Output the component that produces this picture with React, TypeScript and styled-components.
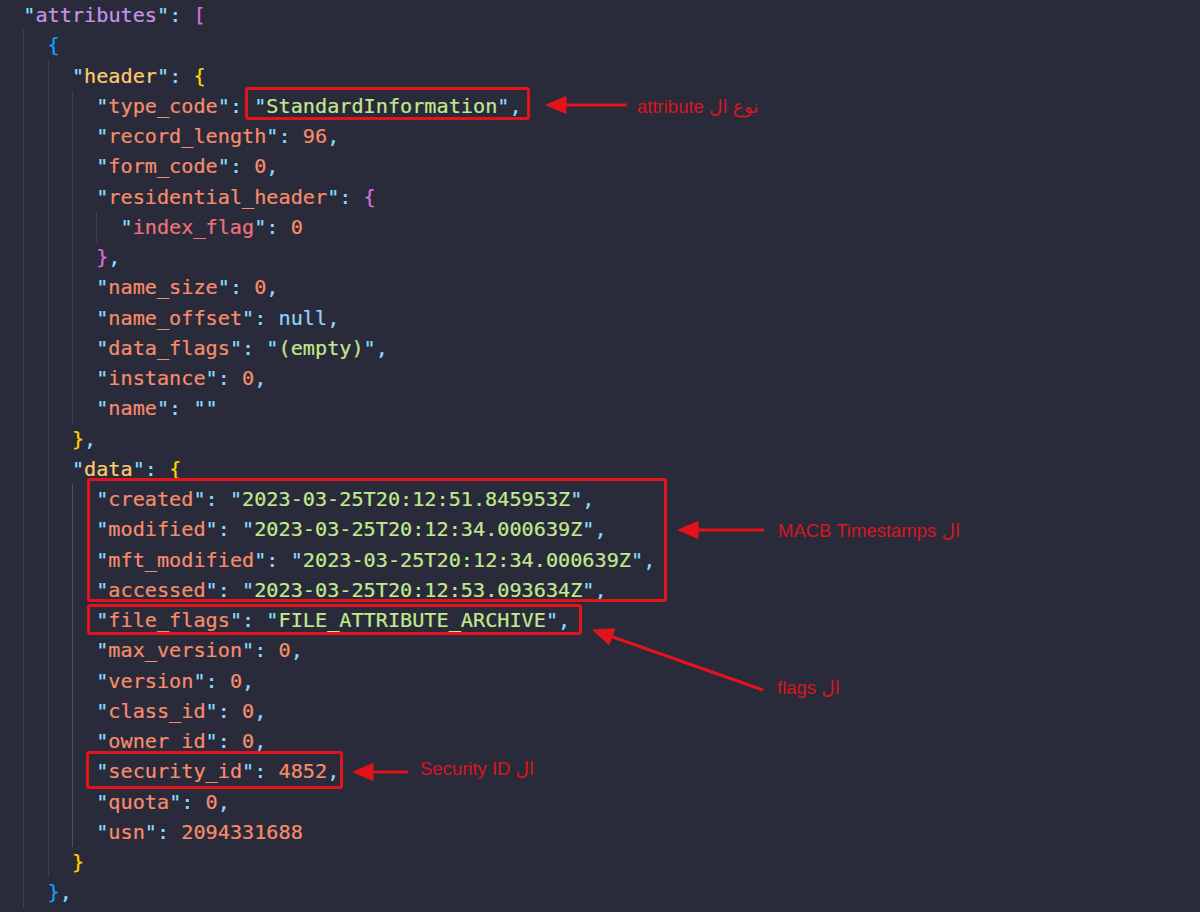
import React from "react";
import styled, { createGlobalStyle } from "styled-components";

const GlobalStyle = createGlobalStyle`
  html, body { margin: 0; padding: 0; background: #292b3b; }
  body { width: 1200px; height: 912px; overflow: hidden; }
`;

const COLORS = {
  p: "#89ddff",
  k1: "#c792ea",
  k2: "#ffcb6b",
  k3: "#f78c6c",
  k4: "#f07178",
  s: "#c3e88d",
  n: "#f78c6c",
  nl: "#8fd3ff",
  gold: "#ffd700",
  orchid: "#da70d6",
  blue: "#179fff",
};
type Kind = keyof typeof COLORS;

const RED = "#e3121b";

const Editor = styled.main`
  position: relative;
  width: 1200px;
  height: 912px;
  background: #292b3b;
  overflow: hidden;
  font-family: "DejaVu Sans Mono", "Liberation Mono", monospace;
  font-size: 20.2px;
`;

const Code = styled.div`
  margin-left: -1px;
  padding-left: 2ch;
  -webkit-text-stroke: 0.2px currentColor;
`;

const Line = styled.div`
  height: 30.25px;
  line-height: 30.25px;
  white-space: pre;
`;

const Block = styled.div<{ $active?: boolean }>`
  border-left: 1px solid ${(p) => (p.$active ? "#4d5063" : "#3e4154")};
  padding-left: calc(2ch - 1px);
`;

const Tok = styled.span<{ $k: Kind }>`
  color: ${(p) => COLORS[p.$k]};
`;

const Mark = styled.span<{ $inset: string }>`
  position: relative;
  display: inline-block;
  vertical-align: top;
  &::after {
    content: "";
    position: absolute;
    inset: ${(p) => p.$inset};
    border: 3px solid ${RED};
    border-radius: 3px;
    pointer-events: none;
  }
`;

const MarkGroup = styled.div<{ $inset: string }>`
  position: relative;
  width: fit-content;
  &::after {
    content: "";
    position: absolute;
    inset: ${(p) => p.$inset};
    border: 3px solid ${RED};
    border-radius: 3px;
    pointer-events: none;
  }
`;

const Overlay = styled.svg`
  position: absolute;
  left: 0;
  top: 0;
  pointer-events: none;
`;

const Label = styled.span<{ $x: number; $y: number }>`
  position: absolute;
  left: ${(p) => p.$x}px;
  top: ${(p) => p.$y}px;
  font-family: "Liberation Sans", "DejaVu Sans", sans-serif;
  font-size: 18.5px;
  line-height: 20px;
  color: #d8161f;
  white-space: nowrap;
`;

const Key = ({ name, level = "k3" }: { name: string; level?: Kind }) => (
  <>
    <Tok $k="p">"</Tok>
    <Tok $k={level}>{name}</Tok>
    <Tok $k="p">": </Tok>
  </>
);

const Str = ({ v }: { v: string }) => (
  <>
    <Tok $k="p">"</Tok>
    <Tok $k="s">{v}</Tok>
    <Tok $k="p">"</Tok>
  </>
);

const Comma = () => <Tok $k="p">,</Tok>;

type FieldProps = {
  name: string;
  value: string;
  kind: "s" | "n" | "nl";
  comma?: boolean;
  level?: Kind;
};

const Value = ({ value, kind }: { value: string; kind: "s" | "n" | "nl" }) =>
  kind === "s" ? <Str v={value} /> : <Tok $k={kind}>{value}</Tok>;

const Field = ({ name, value, kind, comma, level }: FieldProps) => (
  <Line>
    <Key name={name} level={level} />
    <Value value={value} kind={kind} />
    {comma && <Comma />}
  </Line>
);

const Arrow = ({ x1, y1, x2, y2 }: { x1: number; y1: number; x2: number; y2: number }) => {
  // (x1,y1) tail, (x2,y2) tip
  const dx = x2 - x1;
  const dy = y2 - y1;
  const len = Math.hypot(dx, dy);
  const ux = dx / len;
  const uy = dy / len;
  const hl = 20;
  const hw = 8.5;
  const bx = x2 - ux * hl;
  const by = y2 - uy * hl;
  const px = -uy * hw;
  const py = ux * hw;
  return (
    <g fill={RED} stroke={RED}>
      <line x1={x1} y1={y1} x2={bx + ux * 2} y2={by + uy * 2} strokeWidth={3.2} />
      <polygon
        points={`${x2},${y2} ${bx + px},${by + py} ${bx - px},${by - py}`}
        strokeWidth={1}
        strokeLinejoin="round"
      />
    </g>
  );
};

export default function App() {
  return (
    <>
      <GlobalStyle />
      <Editor>
        <Code>
          <Line>
            <Key name="attributes" level="k1" />
            <Tok $k="orchid">[</Tok>
          </Line>
          <Block>
            <Line>
              <Tok $k="blue">{"{"}</Tok>
            </Line>
            <Block>
              <Line>
                <Key name="header" level="k2" />
                <Tok $k="gold">{"{"}</Tok>
              </Line>
              <Block>
                <Line>
                  <Key name="type_code" />
                  <Mark $inset="-4px -8px 1px -9px">
                    <Str v="StandardInformation" />
                    <Comma />
                  </Mark>
                </Line>
                <Field name="record_length" value="96" kind="n" comma />
                <Field name="form_code" value="0" kind="n" comma />
                <Line>
                  <Key name="residential_header" />
                  <Tok $k="orchid">{"{"}</Tok>
                </Line>
                <Block>
                  <Field name="index_flag" value="0" kind="n" level="k4" />
                </Block>
                <Line>
                  <Tok $k="orchid">{"}"}</Tok>
                  <Comma />
                </Line>
                <Field name="name_size" value="0" kind="n" comma />
                <Field name="name_offset" value="null" kind="nl" comma />
                <Field name="data_flags" value="(empty)" kind="s" comma />
                <Field name="instance" value="0" kind="n" comma />
                <Field name="name" value="" kind="s" />
              </Block>
              <Line>
                <Tok $k="gold">{"}"}</Tok>
                <Comma />
              </Line>
              <Line>
                <Key name="data" level="k2" />
                <Tok $k="gold">{"{"}</Tok>
              </Line>
              <Block $active>
                <MarkGroup $inset="-6px -12px 3px -9px">
                  <Field name="created" value="2023-03-25T20:12:51.845953Z" kind="s" comma />
                  <Field name="modified" value="2023-03-25T20:12:34.000639Z" kind="s" comma />
                  <Field name="mft_modified" value="2023-03-25T20:12:34.000639Z" kind="s" comma />
                  <Field name="accessed" value="2023-03-25T20:12:53.093634Z" kind="s" comma />
                </MarkGroup>
                <Line>
                  <Mark $inset="-1px -12px 0px -9px">
                    <Key name="file_flags" />
                    <Str v="FILE_ATTRIBUTE_ARCHIVE" />
                    <Comma />
                  </Mark>
                </Line>
                <Field name="max_version" value="0" kind="n" comma />
                <Field name="version" value="0" kind="n" comma />
                <Field name="class_id" value="0" kind="n" comma />
                <Field name="owner_id" value="0" kind="n" comma />
                <Line>
                  <Mark $inset="-5px -4px -2px -10px">
                    <Key name="security_id" />
                    <Tok $k="n">4852</Tok>
                    <Comma />
                  </Mark>
                </Line>
                <Field name="quota" value="0" kind="n" comma />
                <Field name="usn" value="2094331688" kind="n" />
              </Block>
              <Line>
                <Tok $k="gold">{"}"}</Tok>
              </Line>
            </Block>
            <Line>
              <Tok $k="blue">{"}"}</Tok>
              <Comma />
            </Line>
          </Block>
        </Code>

        <Overlay width={1200} height={912} viewBox="0 0 1200 912">
          <Arrow x1={627} y1={105} x2={546} y2={105} />
          <Arrow x1={764} y1={530} x2={678} y2={530} />
          <Arrow x1={763} y1={690} x2={593} y2={630} />
          <Arrow x1={408} y1={772} x2={353} y2={772} />
        </Overlay>

        <Label $x={637} $y={97} dir="rtl">نوع ال attribute</Label>
        <Label $x={778} $y={521} dir="rtl">ال MACB Timestamps</Label>
        <Label $x={777} $y={678} dir="rtl">ال flags</Label>
        <Label $x={420} $y={759} dir="rtl">ال Security ID</Label>
      </Editor>
    </>
  );
}
